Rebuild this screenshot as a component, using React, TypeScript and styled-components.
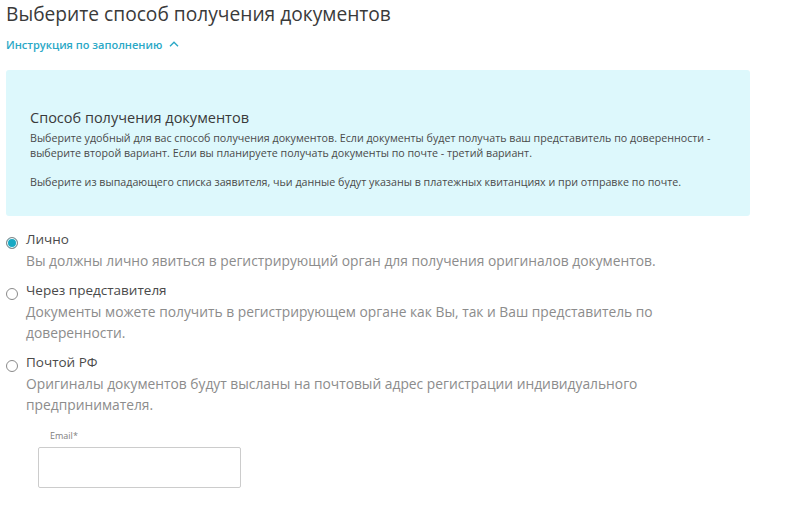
import styled, { createGlobalStyle } from "styled-components"

const GlobalStyle = createGlobalStyle`
  body {
    margin: 0;
    background: #ffffff;
    font-family: 'Open Sans', 'Noto Sans', sans-serif;
  }
`

const options = [
  {
    title: "Лично",
    text: "Вы должны лично явиться в регистрирующий орган для получения оригиналов документов.",
    checked: true,
  },
  {
    title: "Через представителя",
    text: "Документы можете получить в регистрирующем органе как Вы, так и Ваш представитель по доверенности.",
    checked: false,
  },
  {
    title: "Почтой РФ",
    text: "Оригиналы документов будут высланы на почтовый адрес регистрации индивидуального предпринимателя.",
    checked: false,
  },
]

const App = () => {
  return (
    <Page>
      <GlobalStyle />
      <Title>Выберите способ получения документов</Title>
      <Toggle>
        Инструкция по заполнению
        <svg width="10" height="6" viewBox="0 0 10 6">
          <path d="M1 5.2L5 1.2L9 5.2" fill="none" stroke="#2aa8c6" strokeWidth="1.4" />
        </svg>
      </Toggle>
      <InfoBox>
        <InfoTitle>Способ получения документов</InfoTitle>
        <InfoText>
          Выберите удобный для вас способ получения документов. Если документы будет получать ваш представитель по доверенности -
          выберите второй вариант. Если вы планируете получать документы по почте - третий вариант.
        </InfoText>
        <InfoText>
          Выберите из выпадающего списка заявителя, чьи данные будут указаны в платежных квитанциях и при отправке по почте.
        </InfoText>
      </InfoBox>
      <Options>
        {options.map((o) => (
          <Option key={o.title}>
            <Radio $checked={o.checked} />
            <OptionBody>
              <OptionTitle>{o.title}</OptionTitle>
              <OptionText>{o.text}</OptionText>
            </OptionBody>
          </Option>
        ))}
      </Options>
      <Field>
        <FieldLabel>Email*</FieldLabel>
        <Input />
      </Field>
    </Page>
  )
}

export default App

const Page = styled.div`
  width: 810px;
  height: 505px;
  padding: 1px 0 0 6px;
  box-sizing: border-box;
  overflow: hidden;
`

const Title = styled.div`
  font-size: 19.2px;
  line-height: 26px;
  color: #3a3a3a;
`

const Toggle = styled.div`
  display: flex;
  align-items: center;
  gap: 7px;
  margin-top: 10px;
  font-size: 11px;
  font-weight: 600;
  line-height: 16px;
  color: #2aa8c6;
  cursor: pointer;

  svg {
    margin-top: -2px;
  }
`

const InfoBox = styled.div`
  width: 744px;
  box-sizing: border-box;
  margin-top: 17px;
  padding: 38px 24px 26px 24px;
  background: #ddf8fc;
  border-radius: 3px;
`

const InfoTitle = styled.div`
  font-size: 14.5px;
  line-height: 20px;
  color: #3a3a3a;
  margin-bottom: 3px;
`

const InfoText = styled.p`
  margin: 0 0 14px 0;
  font-size: 10.7px;
  line-height: 15px;
  color: #4a4a4a;

  &:last-child {
    margin-bottom: 0;
  }
`

const Options = styled.div`
  display: flex;
  flex-direction: column;
  gap: 9px;
  margin-top: 13px;
`

const Option = styled.label`
  display: flex;
  align-items: flex-start;
  gap: 8px;
  cursor: pointer;
`

const Radio = styled.span<{ $checked: boolean }>`
  flex: none;
  width: 12px;
  height: 12px;
  margin-top: 8px;
  box-sizing: border-box;
  border: 1px solid #8a8a8a;
  border-radius: 50%;
  background: ${(p) => (p.$checked ? "#17a9c4" : "#ffffff")};
  box-shadow: ${(p) => (p.$checked ? "inset 0 0 0 1px #ffffff" : "none")};
`

const OptionBody = styled.div`
  max-width: 680px;
`

const OptionTitle = styled.div`
  font-size: 13.5px;
  line-height: 21px;
  color: #4a4a4a;
`

const OptionText = styled.div`
  font-size: 13.8px;
  line-height: 21px;
  color: #8c8c8c;
`

const Field = styled.div`
  margin: 15px 0 0 32px;
`

const FieldLabel = styled.div`
  padding-left: 12px;
  font-size: 9px;
  line-height: 12px;
  color: #808080;
`

const Input = styled.input`
  display: block;
  width: 203px;
  height: 41px;
  margin-top: 5px;
  box-sizing: border-box;
  border: 1px solid #cccccc;
  border-radius: 2px;
  outline: none;
`
